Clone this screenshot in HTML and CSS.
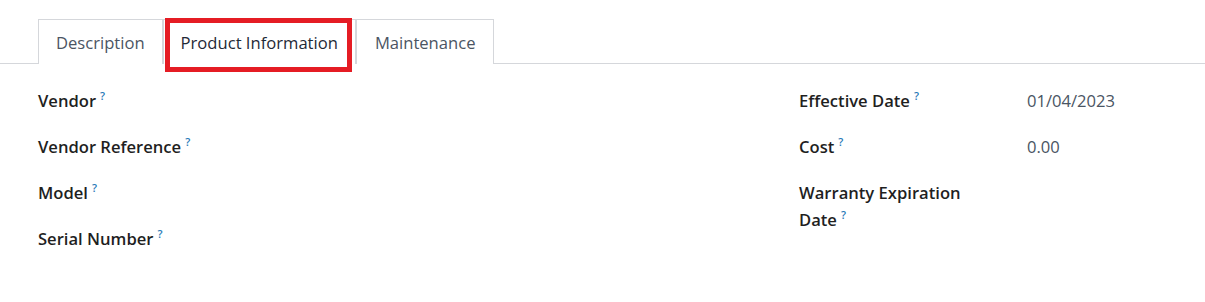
FILE: index.html
```html
<!DOCTYPE html>
<html lang="en">
<head>
    <meta charset="UTF-8">
    <title>Equipment - Product Information</title>
    <link rel="stylesheet" href="styles.css">
</head>
<body>
    <div class="sheet">
        <!-- Notebook tabs -->
        <ul class="tabs">
            <li class="tab">Description</li>
            <li class="tab active">Product Information</li>
            <li class="tab">Maintenance</li>
        </ul>

        <!-- Product information page -->
        <div class="page">
            <div class="group">
                <div class="row">
                    <div class="label">Vendor<sup>?</sup></div>
                    <div class="value"></div>
                </div>
                <div class="row">
                    <div class="label">Vendor Reference<sup>?</sup></div>
                    <div class="value"></div>
                </div>
                <div class="row">
                    <div class="label">Model<sup>?</sup></div>
                    <div class="value"></div>
                </div>
                <div class="row">
                    <div class="label">Serial Number<sup>?</sup></div>
                    <div class="value"></div>
                </div>
            </div>

            <div class="group right">
                <div class="row">
                    <div class="label">Effective Date<sup>?</sup></div>
                    <div class="value">01/04/2023</div>
                </div>
                <div class="row">
                    <div class="label">Cost<sup>?</sup></div>
                    <div class="value">0.00</div>
                </div>
                <div class="row">
                    <div class="label">Warranty Expiration Date<sup>?</sup></div>
                    <div class="value"></div>
                </div>
            </div>
        </div>
    </div>
</body>
</html>
```

FILE: styles.css
```css
body {
    margin: 0;
    font-family: "Open Sans", Arial, sans-serif;
    font-size: 16.6px;
    color: #212529;
    background-color: #fff;
}

.sheet {
    padding-top: 19px;
}

/* Notebook tabs */
.tabs {
    display: flex;
    list-style: none;
    margin: 0;
    padding: 0 0 0 38px;
    border-bottom: 1px solid #d5d7db;
}

.tab {
    height: 44px;
    line-height: 46px;
    padding: 0 17px;
    margin-bottom: -1px;
    border: 1px solid #d5d7db;
    border-bottom: none;
    color: #4b5563;
    background-color: #fff;
}

.tab:last-child {
    padding: 0 18px;
}

.tab.active {
    position: relative;
    color: #1f2a37;
}

/* Red highlight drawn over the active tab */
.tab.active::after {
    content: "";
    position: absolute;
    left: 1px;
    right: 3px;
    top: -2px;
    bottom: -8px;
    border: 5px solid #e51c24;
}

/* Form page */
.page {
    display: grid;
    grid-template-columns: 761px 1fr;
    padding: 14px 0 0 38px;
}

.row {
    display: grid;
    grid-template-columns: 228px 1fr;
    padding: 9px 0 10px;
    line-height: 27px;
}

.label {
    font-weight: 600;
    color: #1f1f1f;
    padding-right: 40px;
}

.label sup {
    position: relative;
    top: -7px;
    font-size: 11px;
    font-weight: 600;
    color: #2a7ab8;
    margin-left: 4px;
    vertical-align: baseline;
    line-height: 1;
}

.value {
    color: #4a5563;
}
```
